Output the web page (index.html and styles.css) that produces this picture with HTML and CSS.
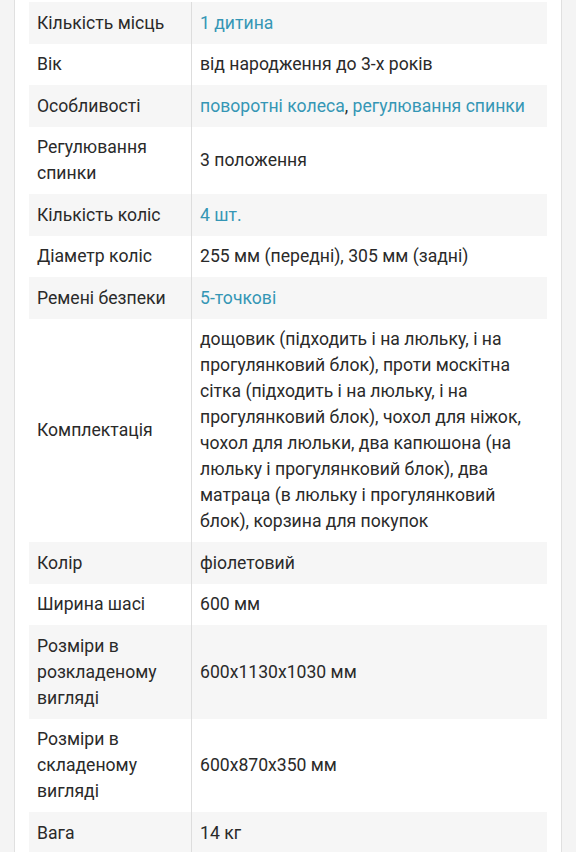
FILE: index.html
```html
<!DOCTYPE html>
<html>
<head>
<meta charset="utf-8">
<title>Характеристики</title>
<link rel="stylesheet" href="styles.css">
</head>
<body>
<div class="card">
	<table class="specs">
		<tr><td class="name">Кількість місць</td><td class="val"><a href="#">1 дитина</a></td></tr>
		<tr><td class="name">Вік</td><td class="val">від народження до 3-х років</td></tr>
		<tr><td class="name">Особливості</td><td class="val"><a href="#">поворотні колеса</a>, <a href="#">регулювання спинки</a></td></tr>
		<tr><td class="name">Регулювання спинки</td><td class="val">3 положення</td></tr>
		<tr><td class="name">Кількість коліс</td><td class="val"><a href="#">4 шт.</a></td></tr>
		<tr><td class="name">Діаметр коліс</td><td class="val">255 мм (передні), 305 мм (задні)</td></tr>
		<tr><td class="name">Ремені безпеки</td><td class="val"><a href="#">5-точкові</a></td></tr>
		<tr><td class="name">Комплектація</td><td class="val">дощовик (підходить і на люльку, і на прогулянковий блок), проти москітна сітка (підходить і на люльку, і на прогулянковий блок), чохол для ніжок, чохол для люльки, два капюшона (на люльку і прогулянковий блок), два матраца (в люльку і прогулянковий блок), корзина для покупок</td></tr>
		<tr><td class="name">Колір</td><td class="val">фіолетовий</td></tr>
		<tr><td class="name">Ширина шасі</td><td class="val">600 мм</td></tr>
		<tr><td class="name">Розміри в розкладеному вигляді</td><td class="val">600x1130x1030 мм</td></tr>
		<tr><td class="name">Розміри в складеному вигляді</td><td class="val">600x870x350 мм</td></tr>
		<tr><td class="name">Вага</td><td class="val">14 кг</td></tr>
	</table>
</div>
</body>
</html>
```

FILE: styles.css
```css
* {
	margin: 0;
	padding: 0;
}

body {
	background: #f4f4f4;
	font-family: Roboto, "Noto Sans", sans-serif;
	font-size: 17.6px;
	line-height: 26px;
	color: #2a2a2a;
}

.card {
	margin: 0 14px;
	padding: 2px 14px 0;
	background: #fff;
	border-left: 1px solid #e0e0e0;
	border-right: 1px solid #e0e0e0;
}

.specs {
	width: 100%;
	border-collapse: collapse;
}

.specs tr:nth-child(odd) td {
	background: #f6f6f6;
}

.specs td {
	padding: 7.75px 8px;
	vertical-align: middle;
}

.specs .name {
	width: 146px;
}

.specs .val {
	border-left: 1px solid #ddd;
}

.specs a {
	color: #3596b5;
	text-decoration: none;
}
```
